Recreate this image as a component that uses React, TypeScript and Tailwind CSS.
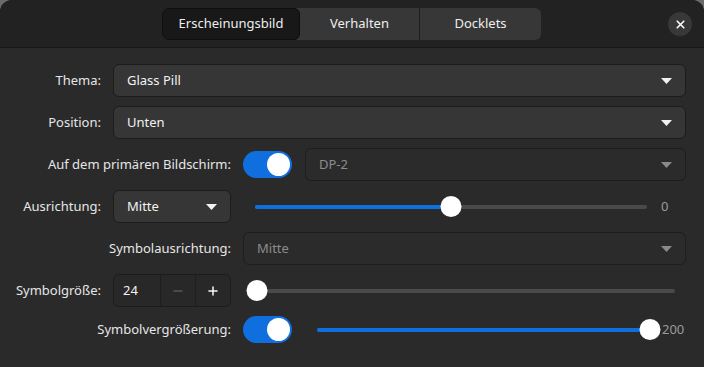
import { Plus, Minus, X } from "lucide-react";

const font = { fontFamily: '"Noto Sans", "Open Sans", sans-serif' };

function Caret({ dim = false }: { dim?: boolean }) {
  return (
    <svg width="11" height="6" viewBox="0 0 11 6" className="shrink-0 mr-[1px]">
      <path d="M0 0h11L5.5 6z" fill={dim ? "#8a8a8a" : "#f2f2f2"} />
    </svg>
  );
}

function Dropdown({
  value,
  disabled = false,
  className = "",
}: {
  value: string;
  disabled?: boolean;
  className?: string;
}) {
  return (
    <div
      className={`h-[33px] rounded-[6px] border flex items-center justify-between pl-[13px] pr-[12px] ${
        disabled
          ? "bg-[#2b2b2b] border-[#1e1e1e] text-[#8c8c8c]"
          : "bg-[#363636] border-[#1c1c1c] text-[#f2f2f2]"
      } ${className}`}
    >
      <span className="text-[13px]">{value}</span>
      <Caret dim={disabled} />
    </div>
  );
}

function Toggle() {
  return (
    <div className="w-[49px] h-[27px] rounded-full bg-[#0f6fdf] flex items-center justify-end pr-[2px] shrink-0">
      <div className="w-[23px] h-[23px] rounded-full bg-white" />
    </div>
  );
}

function Slider({
  pct,
  width,
  showBlue = true,
}: {
  pct: number;
  width: number;
  showBlue?: boolean;
}) {
  return (
    <div className="relative h-[22px] flex items-center shrink-0" style={{ width }}>
      <div className="w-full h-[4px] rounded-full bg-[#4a4a4a]" />
      {showBlue && (
        <div
          className="absolute left-0 h-[4px] rounded-full bg-[#0f6fdf]"
          style={{ width: `${pct}%` }}
        />
      )}
      <div
        className="absolute w-[21px] h-[21px] rounded-full bg-white -translate-x-1/2"
        style={{ left: `${pct}%` }}
      />
    </div>
  );
}

function Label({ text, w }: { text: string; w: number }) {
  return (
    <div
      className="text-right text-[13px] text-[#e6e6e6] shrink-0 whitespace-nowrap"
      style={{ width: w }}
    >
      {text}
    </div>
  );
}

export default function App() {
  return (
    <div className="w-[704px] h-[367px] bg-[#6a6a6a] overflow-hidden" style={font}>
      <div className="w-full h-full rounded-t-[12px] overflow-hidden bg-[#2a2a2a] flex flex-col">
        {/* header */}
        <div className="h-[48px] bg-[#222222] border-b border-[#181818] flex items-center relative shrink-0">
          <div className="ml-[162px] h-[32px] flex rounded-[6px] overflow-hidden bg-[#373737] text-[13px] text-[#eeeeee]">
            <div className="w-[138px] flex items-center justify-center bg-[#181818] border border-[#0e0e0e] rounded-[6px]">
              Erscheinungsbild
            </div>
            <div className="w-[120px] flex items-center justify-center border-r border-[#1e1e1e]">
              Verhalten
            </div>
            <div className="w-[121px] flex items-center justify-center">Docklets</div>
          </div>
          <div className="absolute right-[12px] top-[12px] w-[24px] h-[24px] rounded-full bg-[#383838] flex items-center justify-center">
            <X size={13} strokeWidth={3.2} color="#f5f5f5" />
          </div>
        </div>

        {/* body */}
        <div className="flex flex-col gap-[9px] pt-[16px] pr-[18px]">
          <div className="flex items-center gap-[12px]">
            <Label text="Thema:" w={101} />
            <Dropdown value="Glass Pill" className="flex-1" />
          </div>
          <div className="flex items-center gap-[12px]">
            <Label text="Position:" w={101} />
            <Dropdown value="Unten" className="flex-1" />
          </div>
          <div className="flex items-center gap-[12px]">
            <Label text="Auf dem primären Bildschirm:" w={231} />
            <Toggle />
            <Dropdown value="DP-2" disabled className="flex-1 ml-[1px]" />
          </div>
          <div className="flex items-center gap-[12px]">
            <Label text="Ausrichtung:" w={101} />
            <Dropdown value="Mitte" className="w-[118px]" />
            <div className="ml-[12px]">
              <Slider pct={50} width={392} />
            </div>
            <span className="ml-[2px] text-[13px] text-[#9a9a9a]">0</span>
          </div>
          <div className="flex items-center gap-[12px]">
            <Label text="Symbolausrichtung:" w={231} />
            <Dropdown value="Mitte" disabled className="flex-1" />
          </div>
          <div className="flex items-center gap-[12px]">
            <Label text="Symbolgröße:" w={101} />
            <div className="w-[118px] h-[33px] rounded-[6px] border border-[#1c1c1c] bg-[#282828] flex text-[#f2f2f2] text-[13px]">
              <div className="w-[47px] flex items-center pl-[9px] border-r border-[#1f1f1f]">24</div>
              <div className="w-[35px] flex items-center justify-center border-r border-[#1f1f1f]">
                <Minus size={14} strokeWidth={2.4} color="#555555" />
              </div>
              <div className="flex-1 flex items-center justify-center">
                <Plus size={14} strokeWidth={2.6} color="#f5f5f5" />
              </div>
            </div>
            <div className="ml-[14px]">
              <Slider pct={0} width={418} showBlue={false} />
            </div>
          </div>
          <div className="flex items-center gap-[12px]">
            <Label text="Symbolvergrößerung:" w={231} />
            <Toggle />
            <div className="ml-[13px]">
              <Slider pct={100} width={333} />
            </div>
            <span className="text-[13px] text-[#9a9a9a]">200</span>
          </div>
        </div>
      </div>
    </div>
  );
}
